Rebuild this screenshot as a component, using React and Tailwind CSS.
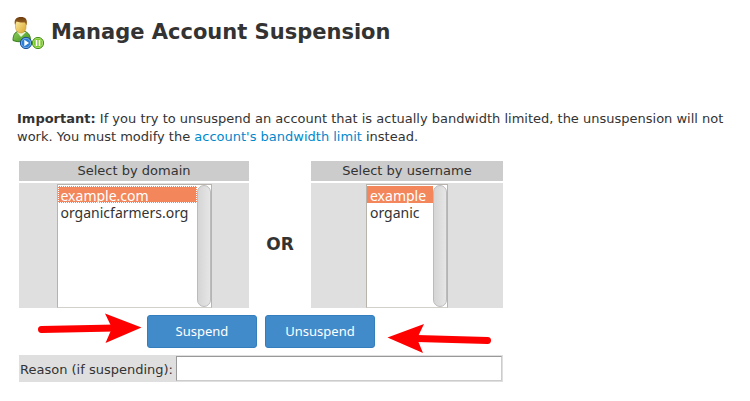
import React from "react";

function AccountIcon() {
  return (
    <svg className="size-9 shrink-0" viewBox="0 0 36 36" aria-hidden="true">
      <defs>
        <linearGradient id="skin" x1="0" y1="0" x2="1" y2="1">
          <stop offset="0" stopColor="#fff0a8" />
          <stop offset="1" stopColor="#d9a52a" />
        </linearGradient>
        <linearGradient id="shirt" x1="0" y1="0" x2="1" y2="1">
          <stop offset="0" stopColor="#8fd05c" />
          <stop offset="1" stopColor="#3f8f1f" />
        </linearGradient>
        <linearGradient id="hair" x1="0" y1="0" x2="0" y2="1">
          <stop offset="0" stopColor="#6b3a0c" />
          <stop offset="1" stopColor="#a8722c" />
        </linearGradient>
      </defs>
      <path d="M1 24.5C1 19 3 16 6 15.500H13C16.500 17 18.500 19 18.500 25C13 26 6 26.500 1 24.500Z" fill="url(#shirt)" stroke="#3b7d1c" />
      <path d="M5 16L9 21L14 16Z" fill="#e8f5d8" />
      <path d="M3.500 6C3.500 2.500 14 2.500 14 6.500V11C14 14.500 12 17 9 17S3.500 14.500 3.500 11Z" fill="url(#skin)" stroke="#c79a35" strokeWidth=".6" />
      <path d="M3 9C1.500 3.500 4.500 1 9 1S16 3.500 14.500 9.500L13 6.500C10 6.500 7 6.500 4.500 5.500Z" fill="url(#hair)" />
      <circle cx="14" cy="27" r="5.600" fill="#2b7fd6" stroke="#174a94" />
      <circle cx="14" cy="27" r="4.700" fill="none" stroke="#a5cbf2" strokeWidth=".6" />
      <path d="M12.300 23.800L17 27L12.300 30.200Z" fill="#fff" />
      <circle cx="26" cy="27" r="5.600" fill="#7cc82a" stroke="#3f8a12" />
      <circle cx="26" cy="27" r="4.700" fill="none" stroke="#c3ec96" strokeWidth=".6" />
      <path d="M24.500 24V30M27.500 24V30" stroke="#fff" strokeWidth="1.600" />
    </svg>
  );
}

function AccountList({ id, options, focused, className }) {
  return (
    <div className="flex h-[124px] border border-[#b8b3ac] border-b-[#d3d0cb] bg-white">
      <select
        id={id}
        size={7}
        defaultValue={options[0]}
        className={
          "h-[121px] appearance-none overflow-hidden border-0 bg-white pt-px font-['Noto_Sans','Open_Sans',sans-serif] text-sm text-[#333] outline-none " +
          className
        }
      >
        {options.map((name, i) => (
          <option
            key={name}
            value={name}
            className={
              "h-[17px] min-h-0 px-[3px] py-0 leading-[15px] checked:bg-[linear-gradient(#f3865b,#f3865b)] checked:[-webkit-text-fill-color:white]" +
              (focused && i === 0 ? " outline-1 -outline-offset-1 outline-dotted outline-white" : "")
            }
          >
            {name}
          </option>
        ))}
      </select>
      <div className="h-full w-3.5 shrink-0 rounded-full border border-[#bbb] bg-linear-to-r from-[#d5d5d5] to-[#e6e6e6]" />
    </div>
  );
}

function AccountPicker({ id, title, options, focused, className, listClassName }) {
  return (
    <div className={"flex flex-col gap-0.5 " + className}>
      <label htmlFor={id} className="bg-[#ccc] py-px text-center">
        {title}
      </label>
      <div className="flex justify-center bg-[#dfdfdf] pt-px">
        <AccountList id={id} options={options} focused={focused} className={listClassName} />
      </div>
    </div>
  );
}

const actionClass =
  "h-[33px] w-[110px] rounded-[3px] border border-[#357ebd] bg-[#428bca] pb-0.5 font-['Noto_Sans','Open_Sans',sans-serif] text-[13px] text-white";

export default function App() {
  return (
    <main className="bg-white px-3 pt-4 font-['DejaVu_Sans',Verdana,sans-serif] text-[13px] leading-[18px] text-[#333]">
      <header className="flex h-9 items-center gap-[3px]">
        <AccountIcon />
        <h1 className="pb-1 text-[21px] leading-7 font-bold">Manage Account Suspension</h1>
      </header>

      <p className="mt-[58px] px-[5px]">
        <strong>Important:</strong> If you try to unsuspend an account that is actually bandwidth
        limited, the unsuspension will not work. You must modify the{" "}
        <a href="#bandwidth" className="text-[#08c]">
          account's bandwidth limit
        </a>{" "}
        instead.
      </p>

      <form className="mt-[15px] ml-[7px] max-w-[484px]" onSubmit={(e) => e.preventDefault()}>
        <div className="flex">
          <AccountPicker
            id="domain"
            title="Select by domain"
            options={["example.com", "organicfarmers.org"]}
            focused
            className="w-[230px]"
            listClassName="w-[139px]"
          />
          <div className="flex flex-1 items-center justify-center pt-[18px] text-[17px] font-bold">OR</div>
          <AccountPicker
            id="username"
            title="Select by username"
            options={["example", "organic"]}
            className="w-48"
            listClassName="w-[66px]"
          />
        </div>

        <div className="relative mt-[7px] flex justify-center gap-2">
          <button type="submit" className={actionClass}>
            Suspend
          </button>
          <button type="submit" className={actionClass}>
            Unsuspend
          </button>
          <svg className="absolute -top-1 left-4 h-9 w-28" viewBox="0 0 112 36" aria-hidden="true">
            <path d="M6.500 18.500L80 17" stroke="#f00" strokeWidth="7" strokeLinecap="round" />
            <path d="M106.500 16.500L70 2.500L77 17L70.500 32Z" fill="#f00" />
          </svg>
          <svg className="absolute top-2 right-2 h-9 w-28" viewBox="0 0 112 36" aria-hidden="true">
            <path d="M104.500 17.500L34 15.500" stroke="#f00" strokeWidth="7" strokeLinecap="round" />
            <path d="M4.500 14.500L41 1L34 15.500L40 30Z" fill="#f00" />
          </svg>
        </div>

        <div className="mt-[7px] flex items-center bg-[#dfdfdf] p-px">
          <label htmlFor="reason" className="pt-0.5 pr-[3px]">
            Reason (if suspending):
          </label>
          <input
            id="reason"
            type="text"
            className="h-[25px] min-w-0 flex-1 border border-t-[#999] border-r-[#ccc] border-b-[#ccc] border-l-[#999] bg-white px-1 outline-none"
          />
        </div>
      </form>
    </main>
  );
}
